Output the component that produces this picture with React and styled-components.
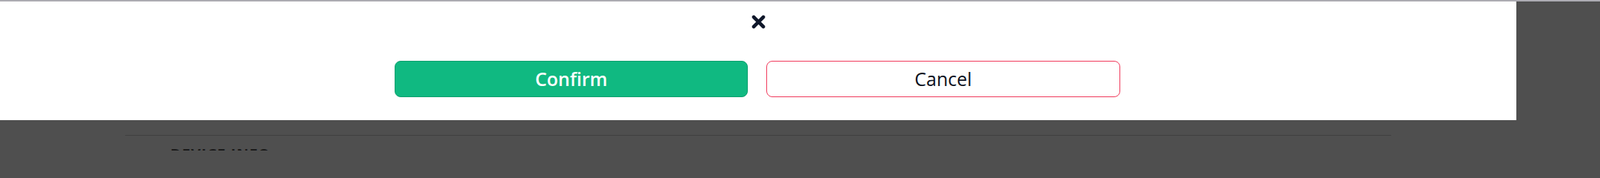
import styled, { createGlobalStyle } from "styled-components"

const GlobalStyle = createGlobalStyle`
	html, body {
		margin: 0;
		padding: 0;
		background: #4f4f4f;
		font-family: "Open Sans", "Noto Sans", "Liberation Sans", sans-serif;
	}
`

const Page = styled.div`
	width: 2161px;
	height: 203px;
	overflow: hidden;
	background: #4f4f4f;
`

const TopLine = styled.div`
	height: 2px;
	background: #acabb2;
`

const Dialog = styled.div`
	width: 2048px;
	height: 160px;
	box-sizing: border-box;
	background: #ffffff;
	display: flex;
	flex-direction: column;
	align-items: center;
	padding-top: 14px;
`

const CloseButton = styled.button`
	border: none;
	background: none;
	padding: 0;
	margin: 0;
	width: 22px;
	height: 26px;
	display: flex;
	align-items: center;
	justify-content: center;
	color: #0f172a;
	cursor: pointer;
`

const Actions = styled.div`
	display: flex;
	gap: 25px;
	margin-top: 40px;
	margin-right: 2px;
`

const ActionButton = styled.button`
	width: ${p => (p.$primary ? "477px" : "478px")};
	height: 49px;
	box-sizing: border-box;
	border-radius: 8px;
	font-family: "Open Sans", "Noto Sans", sans-serif;
	font-size: 25px;
	font-weight: ${p => (p.$primary ? 600 : 500)};
	line-height: 1;
	cursor: pointer;
	border: 1px solid ${p => (p.$primary ? "#0e9f6e" : "#f0385a")};
	background: ${p => (p.$primary ? "#10b981" : "#ffffff")};
	color: ${p => (p.$primary ? "#ffffff" : "#0b1120")};
`

const Body = styled.div`
	padding: 20px 0 0 169px;
`

const Divider = styled.div`
	width: 1710px;
	height: 1px;
	background: #404040;
`

const SectionTitle = styled.div`
	margin: 13px 0 0 61px;
	font-size: 20px;
	font-weight: 700;
	letter-spacing: 1px;
	color: #1a1a1a;
	line-height: 24px;
`

function CloseIcon() {
	return (
		<svg width="19" height="19" viewBox="0 0 19 19">
			<path d="M3 3 L16 16 M16 3 L3 16" stroke="currentColor" strokeWidth="4.6" strokeLinecap="round" />
		</svg>
	)
}

export default function App() {
	return (
		<>
			<GlobalStyle />
			<Page>
				<TopLine />
				<Dialog>
					<CloseButton aria-label="close">
						<CloseIcon />
					</CloseButton>
					<Actions>
						<ActionButton $primary>Confirm</ActionButton>
						<ActionButton>Cancel</ActionButton>
					</Actions>
				</Dialog>
				<Body>
					<Divider />
					<SectionTitle>DEVICE INFO</SectionTitle>
				</Body>
			</Page>
		</>
	)
}
